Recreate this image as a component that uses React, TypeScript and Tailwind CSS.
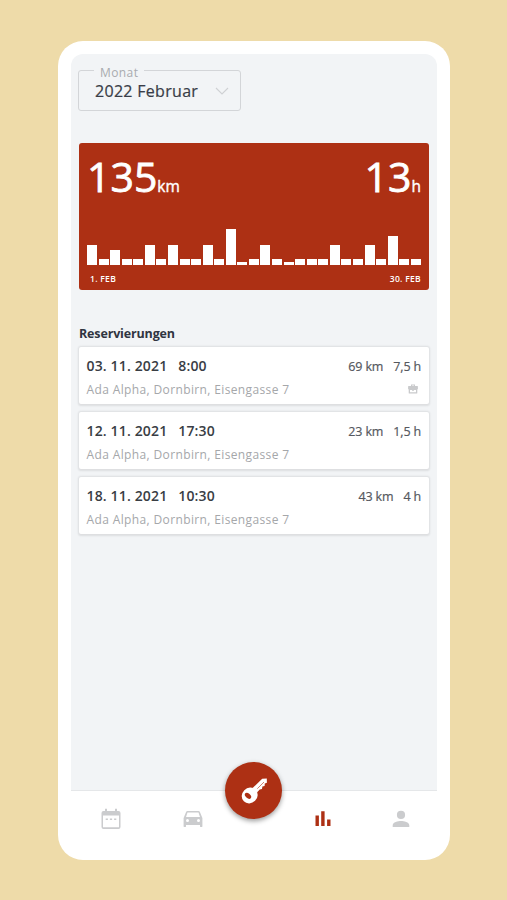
import React from "react";

const BARS = [
  20, 6, 15.5, 6, 6, 20, 6, 20, 6, 6, 20, 6, 36, 3, 6, 20, 6, 3, 6, 6, 6, 20, 6, 6, 20, 6, 29, 6, 6,
];

const TRIPS = [
  { date: "03. 11. 2021", time: "8:00", km: "69 km", hours: "7,5 h", business: true },
  { date: "12. 11. 2021", time: "17:30", km: "23 km", hours: "1,5 h", business: false },
  { date: "18. 11. 2021", time: "10:30", km: "43 km", hours: "4 h", business: false },
];

function MonthSelect() {
  return (
    <fieldset className="ml-[7px] mt-[9px] h-[48px] w-[163px] rounded-[3px] border border-[#d3d5d8] pl-[16px]">
      <legend className="-ml-px h-[14px] px-[6px] pt-[3px] text-[12px] leading-[14px] tracking-[0.4px] text-[#a9abaf]">
        Monat
      </legend>
      <div className="flex items-center justify-between pr-[11px]">
        <span className="whitespace-nowrap pt-px text-[16px] leading-[27px] tracking-[0.3px] text-[#393d47] [-webkit-text-stroke:0.2px]">
          2022 Februar
        </span>
        <svg className="h-[8px] w-[14px]" viewBox="0 0 14 8" fill="none" stroke="#cfd1d4" strokeWidth="1.1">
          <path d="M1 1l6 6 6-6" />
        </svg>
      </div>
    </fieldset>
  );
}

function Summary() {
  return (
    <section className="mx-2 mt-[32px] flex h-[147px] flex-col rounded-[3px] bg-[#ad3014] pl-[9px] pr-[8px] text-white">
      <div className="-ml-px flex justify-between pt-[13px] leading-none">
        <div className="flex items-baseline">
          <span className="text-[41px] leading-none [-webkit-text-stroke:0.8px]">135</span>
          <span className="text-[15.5px] leading-none [-webkit-text-stroke:0.4px]">km</span>
        </div>
        <div className="flex items-baseline">
          <span className="text-[41px] leading-none [-webkit-text-stroke:0.8px]">13</span>
          <span className="text-[15.5px] leading-none [-webkit-text-stroke:0.4px]">h</span>
        </div>
      </div>
      <div className="-ml-px mt-[32px] flex h-[36px] items-end justify-between">
        {BARS.map((h, i) => (
          <span key={i} className="w-[10px] bg-white" style={{ height: h }} />
        ))}
      </div>
      <div className="mt-[10px] flex justify-between pl-[2px] text-[8.5px] font-semibold leading-none tracking-[0.3px]">
        <span>1. FEB</span>
        <span>30. FEB</span>
      </div>
    </section>
  );
}

function Briefcase() {
  return (
    <svg className="relative top-[-1px] mr-[3px] h-[10px] w-[10px]" viewBox="0 0 10 10" fill="#c9cacc">
      <path
        fillRule="evenodd"
        d="M3 2V.5h4V2h2.400a.5.5 0 0 1 .5.5v2.800h-.6v3.700a.5.5 0 0 1-.5.5H1.200a.5.5 0 0 1-.5-.5V5.300H.1V2.500a.5.5 0 0 1 .5-.5zM4 2h2v-.6H4zM2 6v2.200h6V6H6v.8H4V6z"
      />
    </svg>
  );
}

function Trip({ trip }: { trip: (typeof TRIPS)[number] }) {
  return (
    <li className="flex h-[57px] flex-col rounded-[2px] bg-white pl-[7.5px] pr-[8px] pt-[9px] shadow-[0_0.5px_2px_1px_rgba(0,0,0,0.09)]">
      <div className="flex justify-between leading-[20px]">
        <div className="flex gap-[11px] text-[14px] font-semibold tracking-[0.15px] text-[#393d44]">
          <span>{trip.date}</span>
          <span>{trip.time}</span>
        </div>
        <div className="flex gap-[10px] pt-px text-[12.5px] leading-[20px] tracking-[-0.15px] text-[#55585e] [-webkit-text-stroke:0.2px]">
          <span>{trip.km}</span>
          <span>{trip.hours}</span>
        </div>
      </div>
      <div className="mt-[4px] flex items-center justify-between text-[12px] leading-[18px] tracking-[0.37px] text-[#a5a7aa]">
        <span>Ada Alpha, Dornbirn, Eisengasse 7</span>
        {trip.business && <Briefcase />}
      </div>
    </li>
  );
}

function NavBar() {
  return (
    <nav className="relative h-[70px] border-t border-[#e5e7e9] text-[#cbccce]">
      <div className="flex items-center pl-[28px] pt-[16px]">
        <svg className="h-[24px] w-[24px]" viewBox="0 0 24 24" fill="currentColor">
          <path d="M19.500 4H18V1.800h-2V4H8V1.800H6V4H4.500a2 2 0 0 0-2 2v14a2 2 0 0 0 2 2h15a2 2 0 0 0 2-2V6a2 2 0 0 0-2-2zm.5 16.300H4V8.500h16zM6.700 11.500h2.200V13H6.700zm4.200 0h2.200V13h-2.200zm4.200 0h2.200V13h-2.200z" />
        </svg>
        <svg className="ml-[58px] h-[24px] w-[24px]" viewBox="0 0 24 24" fill="currentColor">
          <path d="M18.920 5c-.2-.6-.76-1-1.420-1h-11c-.66 0-1.210.4-1.420 1L2.600 11v8.500c0 .3.200.5.500.5h1.400c.3 0 .5-.2.500-.5V18h14v1.500c0 .3.200.5.500.5h1.400c.3 0 .5-.2.500-.5V11zM6.500 15a1.500 1.500 0 1 1 0-3 1.500 1.500 0 0 1 0 3zm11 0a1.500 1.500 0 1 1 0-3 1.500 1.500 0 0 1 0 3zM5 10l1.500-4.500h11L19 10z" />
        </svg>
        <svg className="ml-[110px] h-[16px] w-[16px] text-[#ad3014]" viewBox="0 0 16 16" fill="currentColor">
          <path d="M.5 4.500h3.400V15H.5zM6.200 0.200h3.400V15H6.200zM12.100 8.500h3.400V15h-3.400z" />
        </svg>
        <svg className="ml-[58px] h-[24px] w-[24px]" viewBox="0 0 24 24" fill="currentColor">
          <path d="M12 12a4.100 4.100 0 1 0 0-8.200 4.100 4.100 0 0 0 0 8.200zm0 2c-2.900 0-8.300 1.300-8.300 4.200V20h16.600v-1.800c0-2.900-5.400-4.200-8.300-4.200z" />
        </svg>
      </div>
      <button
        aria-label="Schlüssel"
        className="absolute left-[154px] top-[-29px] flex h-[57px] w-[57px] items-center justify-center rounded-full bg-[#ad3014] shadow-[0_2px_5px_rgba(0,0,0,0.4)]"
      >
        <svg className="h-[28px] w-[28px]" viewBox="0 0 28 28" fill="none">
          <ellipse cx="9.700" cy="18.500" rx="8.300" ry="7.600" transform="rotate(-45 9.700 18.500)" fill="#fff" />
          <path d="M11 12.500L22.200 1.800l4.600-.4.100 4.400-2.100.8-.2 2.400-2.200.6-.4 2.400-2.300.5-3.900 4.200z" fill="#fff" />
          <path d="M17.300 11.700L24 5" stroke="#ad3014" strokeWidth="0.600" />
          <ellipse cx="8" cy="18.800" rx="3.700" ry="2.300" transform="rotate(42 8 18.800)" fill="#ad3014" />
        </svg>
      </button>
    </nav>
  );
}

export default function App() {
  return (
    <main className="flex h-[900px] w-[507px] bg-[#eedba9] pl-[58px] pt-[41px] font-['Open_Sans','Noto_Sans',sans-serif]">
      <div className="flex h-[819px] w-[392px] flex-col rounded-[25px] bg-white px-[13px] pt-[13px]">
        <div className="flex h-[736px] flex-col rounded-t-[12px] bg-[#f2f4f6]">
          <MonthSelect />
          <Summary />
          <h2 className="ml-2 mt-[34px] text-[12.5px] font-bold leading-[20px] tracking-[-0.15px] text-[#303541]">
            Reservierungen
          </h2>
          <ul className="mx-2 mt-[3px] flex flex-col gap-[8px]">
            {TRIPS.map((t) => (
              <Trip key={t.date} trip={t} />
            ))}
          </ul>
        </div>
        <NavBar />
      </div>
    </main>
  );
}
